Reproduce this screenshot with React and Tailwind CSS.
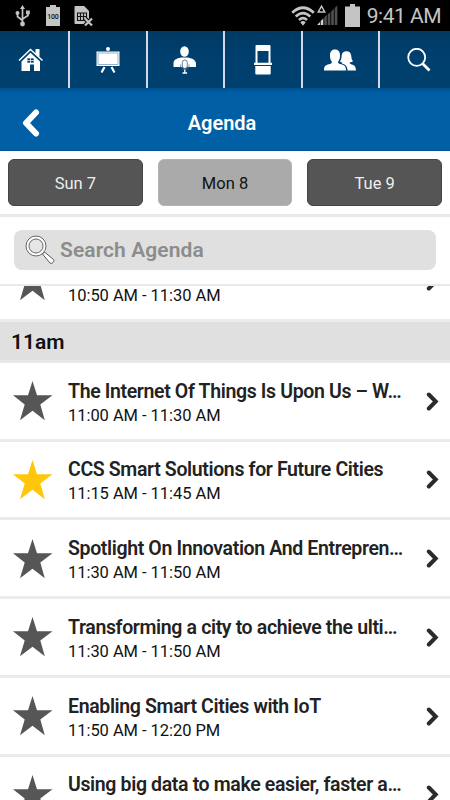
const sessions = [
  { time: '10:50 AM - 11:30 AM' },
  { header: '11am' },
  { title: 'The Internet Of Things Is Upon Us – W…', time: '11:00 AM - 11:30 AM' },
  { title: 'CCS Smart Solutions for Future Cities', time: '11:15 AM - 11:45 AM', starred: true },
  { title: 'Spotlight On Innovation And Entrepren…', time: '11:30 AM - 11:50 AM' },
  { title: 'Transforming a city to achieve the ulti…', time: '11:30 AM - 11:50 AM' },
  { title: 'Enabling Smart Cities with IoT', time: '11:50 AM - 12:20 PM' },
  { title: 'Using big data to make easier, faster a…' },
]

const days = [
  { label: 'Sun 7' },
  { label: 'Mon 8', selected: true },
  { label: 'Tue 9' },
]

function UsbIcon() {
  return (
    <svg className="w-4 h-[22px]" viewBox="0 0 16 22" fill="none" stroke="#c4c4c4" strokeWidth="1.7">
      <path d="M7.5 3v15M2.5 8v3.5l5 4M13 8v2.5l-5.5 3.5" />
      <path d="M7.5 0L10 4H5z" fill="#c4c4c4" stroke="none" />
      <circle cx="2.5" cy="8" r="2" fill="#c4c4c4" stroke="none" />
      <rect x="11" y="5.5" width="3.8" height="3.8" fill="#c4c4c4" stroke="none" />
      <circle cx="7.5" cy="19" r="2.4" fill="#c4c4c4" stroke="none" />
    </svg>
  )
}

function SimIcon() {
  return (
    <svg className="w-5 h-[22px]" viewBox="0 0 20 22">
      <path d="M1.5 1h8.7L15 6v13H1.5a1 1 0 0 1-1-1V2a1 1 0 0 1 1-1z" fill="#c4c4c4" />
      <path d="M3.5 8h9v7.5h-9zM3.5 11.5h9M6.5 8v7.5M9.5 8v7.5" fill="none" stroke="#111" strokeWidth="1.1" />
      <path d="M11 13.5l7 7M18 13.5l-7 7" stroke="#000" strokeWidth="4.2" />
      <path d="M11 13.5l7 7M18 13.5l-7 7" stroke="#c4c4c4" strokeWidth="2.2" />
    </svg>
  )
}

function WifiIcon() {
  return (
    <svg className="w-6 h-5" viewBox="0 0 24 20" fill="none" stroke="#c4c4c4" strokeWidth="2.7">
      <path d="M1.2 6.7Q12-3.2 22.8 6.7M4.7 10.6Q12 3.8 19.3 10.6M8 14Q12 10.4 16 14" />
      <path d="M9.3 16.2Q12 14 14.7 16.2L12 19.8z" fill="#c4c4c4" stroke="none" />
    </svg>
  )
}

function SignalIcon() {
  return (
    <svg className="w-[21px] h-[21px]" viewBox="0 0 21 21">
      <path d="M4.5 1.2L7.7 7H1.3z" fill="none" stroke="#c4c4c4" strokeWidth="1.5" />
      <path d="M0 20h3v-3zM3.7 20h2.6v-6.5l-2.6 2.6z" fill="#d0d0d0" />
      <path d="M7.2 20h2.6V10L7.2 12.6zM10.7 20h2.6V7l-2.6 2.6zM14.2 20h2.6V3.8l-2.6 2.6zM17.7 20h2.6V.5l-2.6 2.5z" fill="#505050" />
    </svg>
  )
}

function StatusBar() {
  return (
    <div className="h-[31px] shrink-0 bg-black flex items-center justify-between text-[#c4c4c4]">
      <div className="flex items-center pl-[15px]">
        <UsbIcon />
        <svg className="w-[15px] h-[21px] ml-[15px]" viewBox="0 0 15 21">
          <path d="M4 0h6v2h4v19H0V2h4z" fill="#c4c4c4" />
          <text x="7" y="13.5" textAnchor="middle" textLength="11.5" fontFamily="Roboto, sans-serif" fontSize="7" fontWeight="500" fill="#111">100</text>
        </svg>
        <div className="ml-[13px]"><SimIcon /></div>
      </div>
      <div className="flex items-center pr-[9px]">
        <WifiIcon />
        <div className="ml-[2px]"><SignalIcon /></div>
        <svg className="w-[15px] h-[23px] ml-[7px]" viewBox="0 0 15 23">
          <path d="M5 0h5v2.5h5V23H0V2.5h5z" fill="#c4c4c4" />
        </svg>
        <span className="ml-[7px] mt-[2px] text-[21px] tracking-[-0.5px] leading-none">9:41 AM</span>
      </div>
    </div>
  )
}

function HomeIcon() {
  return (
    <svg className="w-[26px] h-6" viewBox="0 0 26 24">
      <path d="M17.5 1h4v8l-4-3.5z" fill="#fff" />
      <path d="M1 12.5L12.5 1.5 24.5 12.5" fill="none" stroke="#fff" strokeWidth="1.5" />
      <path d="M3.5 13.5l9-8.7 9.5 8.7V23h-6v-6.5h-4V23H3.5z" fill="#fff" />
      <path d="M9 10h7v5H9zM12.5 10v5M9 12.5h7" fill="#00406f" stroke="#fff" strokeWidth=".7" />
    </svg>
  )
}

function BoardIcon() {
  return (
    <svg className="w-6 h-[26px]" viewBox="0 0 24 26">
      <circle cx="12" cy="2" r="2" fill="#fff" />
      <path d="M.5 4.5h23V19H.5z" fill="#fff" />
      <path d="M2 6h20v11.5H2z" fill="none" stroke="#8ea9bd" strokeWidth=".9" />
      <path d="M8.5 20l-3 5.5M15.5 20l3 5.5" stroke="#fff" strokeWidth="2.2" />
    </svg>
  )
}

function SpeakerIcon() {
  return (
    <svg className="w-6 h-7" viewBox="0 0 24 28">
      <ellipse cx="11.5" cy="5.5" rx="4.3" ry="5.3" fill="#fff" />
      <path d="M.5 21v-3.5c0-3.5 2.5-5 7.5-6h7c5 1 8 3 8 6.5v3z" fill="#fff" />
      <rect x="9.3" y="14" width="5" height="8.5" rx="2.5" fill="#fff" stroke="#3c6384" strokeWidth=".8" />
      <path d="M7.6 18.5V20c0 5.5 8.4 5.5 8.4 0v-1.5" fill="none" stroke="#3c6384" strokeWidth=".7" />
      <path d="M11.8 23.5v3M9.5 27h4.6" stroke="#fff" strokeWidth="1.3" />
    </svg>
  )
}

function BoothIcon() {
  return (
    <svg className="w-[18px] h-[30px]" viewBox="0 0 18 30">
      <path d="M2.5 0h13a1 1 0 0 1 1 1v17.5h-2V6h-11v12.5h-2V1a1 1 0 0 1 1-1z" fill="#fff" />
      <path d="M0 17.8h18V20H0zM1.3 21h15.4v7.5a1 1 0 0 1-1 1H2.3a1 1 0 0 1-1-1z" fill="#fff" />
    </svg>
  )
}

function PeopleIcon() {
  return (
    <svg className="w-8 h-[22px]" viewBox="0 0 32 22" fill="#fff">
      <path d="M0 21.5c0-4.5 1.5-5.3 5-6.3 2.5-.7 3.2-1.2 2.7-2.7C6.500 11 6 9.500 6 6c0-3.500 2-5.500 5-5.500S16 2.500 16 6c0 3.500-.5 5-1.800 6.500-.5 1.500.4 2 2.800 2.700 3.500 1 5 1.800 5 6.300z" />
      <path d="M18 13.500c-1-.2-1.800-.8-2-1.300 1.600-1.500 1.300-3.500 1.700-6C18 3.500 19.800 2.300 22.500 2.300s4.300 1.500 4.700 4.200c.3 2.500.3 4.300 1.800 5.500-.8 1-1.800 1.300-3.500 1.500.2 1.200 1 1.500 2.500 2 2.800 1 3.800 2.300 4 6h-8.500c-.2-4-1.500-5.700-5.500-7z" />
    </svg>
  )
}

function SearchIcon() {
  return (
    <svg className="w-6 h-6" viewBox="0 0 24 24" fill="none" stroke="#fff">
      <circle cx="9.7" cy="9.3" r="8.5" strokeWidth="1.8" />
      <path d="M15.5 15.5l7 7" strokeWidth="2.8" />
    </svg>
  )
}

const navItems = [
  { Icon: HomeIcon, cell: 'w-[70px] pr-[7px] border-r-2' },
  { Icon: BoardIcon, cell: 'w-[77.5px] border-r-2' },
  { Icon: SpeakerIcon, cell: 'w-[77.5px] border-r-2' },
  { Icon: BoothIcon, cell: 'w-[77.5px] border-r-2' },
  { Icon: PeopleIcon, cell: 'w-[77.5px] border-r-2' },
  { Icon: SearchIcon, cell: 'w-[70px] pl-[7px]' },
]

function NavBar() {
  return (
    <div className="h-[57px] shrink-0 flex bg-gradient-to-b from-[#003a63] via-[#00406f] to-[#00406f]">
      {navItems.map(({ Icon, cell }, i) => (
        <div key={i} className={`flex items-center justify-center border-[#d3d9ea] ${cell}`}>
          <Icon />
        </div>
      ))}
    </div>
  )
}

function StarIcon({ starred }) {
  return (
    <svg className="w-10 h-10 mt-px shrink-0" viewBox="0 0 40 40">
      <path
        d="M19.5 0L24 14.2H39.5L27.3 23.5 31.8 39.3 19.5 29.8 7 39.3 11.7 23.5 0 14.2H15z"
        fill={starred ? '#ffc60b' : '#565656'}
      />
    </svg>
  )
}

function SessionRow({ session }) {
  return (
    <div className="h-[78.75px] shrink-0 border-b-3 border-[#ebebeb] flex items-center pl-[13px] pr-[11px]">
      <StarIcon starred={session.starred} />
      <div className="flex-1 h-12 mt-[6px] pl-[15px] whitespace-nowrap">
        <div className="h-6 text-[19.5px] leading-6 tracking-[-0.36px] font-semibold text-[#222]">{session.title}</div>
        <div className="text-[16.5px] leading-6 tracking-[-0.05px] text-[#111]">{session.time}</div>
      </div>
      <svg className="w-[13px] h-[19px] mt-px shrink-0" viewBox="0 0 13 19" fill="none" stroke="#2b2b2b" strokeWidth="4" strokeLinecap="round">
        <path d="M2.8 2.5l6.9 7-6.9 7" />
      </svg>
    </div>
  )
}

export default function App() {
  return (
    <div className="w-[450px] h-[800px] overflow-hidden flex flex-col bg-white font-['Roboto',sans-serif]">
      <StatusBar />
      <NavBar />

      {/* Title bar */}
      <div className="h-[63px] shrink-0 flex items-center bg-gradient-to-b from-[#00508a] from-0% via-[#005fa5] via-8% to-[#005fa5] border-b border-[#00509a] text-white">
        <svg className="w-[18px] h-[28px] ml-[22px] mt-[7px]" viewBox="0 0 18 28" fill="none" stroke="#fff" strokeWidth="6">
          <path d="M14 3.5L4 14l10 10.5" strokeLinecap="round" strokeLinejoin="round" />
        </svg>
        <h1 className="flex-1 text-center pr-[46px] mt-2 text-xl font-semibold">Agenda</h1>
      </div>

      {/* Day tabs */}
      <div className="h-[66px] shrink-0 flex gap-[15px] px-2 pt-2 border-b-3 border-[#e9e9e9]">
        {days.map((day) => (
          <div
            key={day.label}
            className={`flex-1 h-[47px] pt-[3px] rounded-md border flex items-center justify-center text-[16.5px] ${
              day.selected ? 'bg-[#aaa] border-[#b4b4b4] text-[#111]' : 'bg-[#555] border-[#444] text-[#eee]'
            }`}
          >
            {day.label}
          </div>
        ))}
      </div>

      {/* Search */}
      <div className="h-[69px] shrink-0 px-[14px] pt-[13px] border-b-2 border-[#e9e9e9]">
        <div className="h-10 rounded-lg bg-[#e0e0e0] flex items-center pl-[11px]">
          <svg className="w-[30px] h-[30px]" viewBox="0 0 30 30" fill="none">
            <path d="M17.5 19l2-2 9 7.5c1.500 1.500-1.500 5-3.500 3.500z" fill="#fff" stroke="#555" strokeWidth="1" />
            <circle cx="11" cy="11" r="10" fill="#fff" stroke="#666" />
            <circle cx="11" cy="11" r="7" fill="#e6e6e6" stroke="#666" />
          </svg>
          <span className="pl-[5px] pt-[2px] text-[21px] tracking-[0.08px] font-semibold text-[#8c8c8c]">Search Agenda</span>
        </div>
      </div>

      {/* Session list, scrolled part of the way down */}
      <div className="flex-1 min-h-0 overflow-hidden">
        <div className="flex flex-col -mt-[43px]">
          {sessions.map((session, i) =>
            session.header ? (
              <div key={i} className="h-[41px] shrink-0 bg-[#e0e0e0] border-b-3 border-[#e8e8e8] flex items-center pl-[11px] pt-[4px] text-[21px] font-semibold text-[#111]">
                {session.header}
              </div>
            ) : (
              <SessionRow key={i} session={session} />
            ),
          )}
        </div>
      </div>
    </div>
  )
}
